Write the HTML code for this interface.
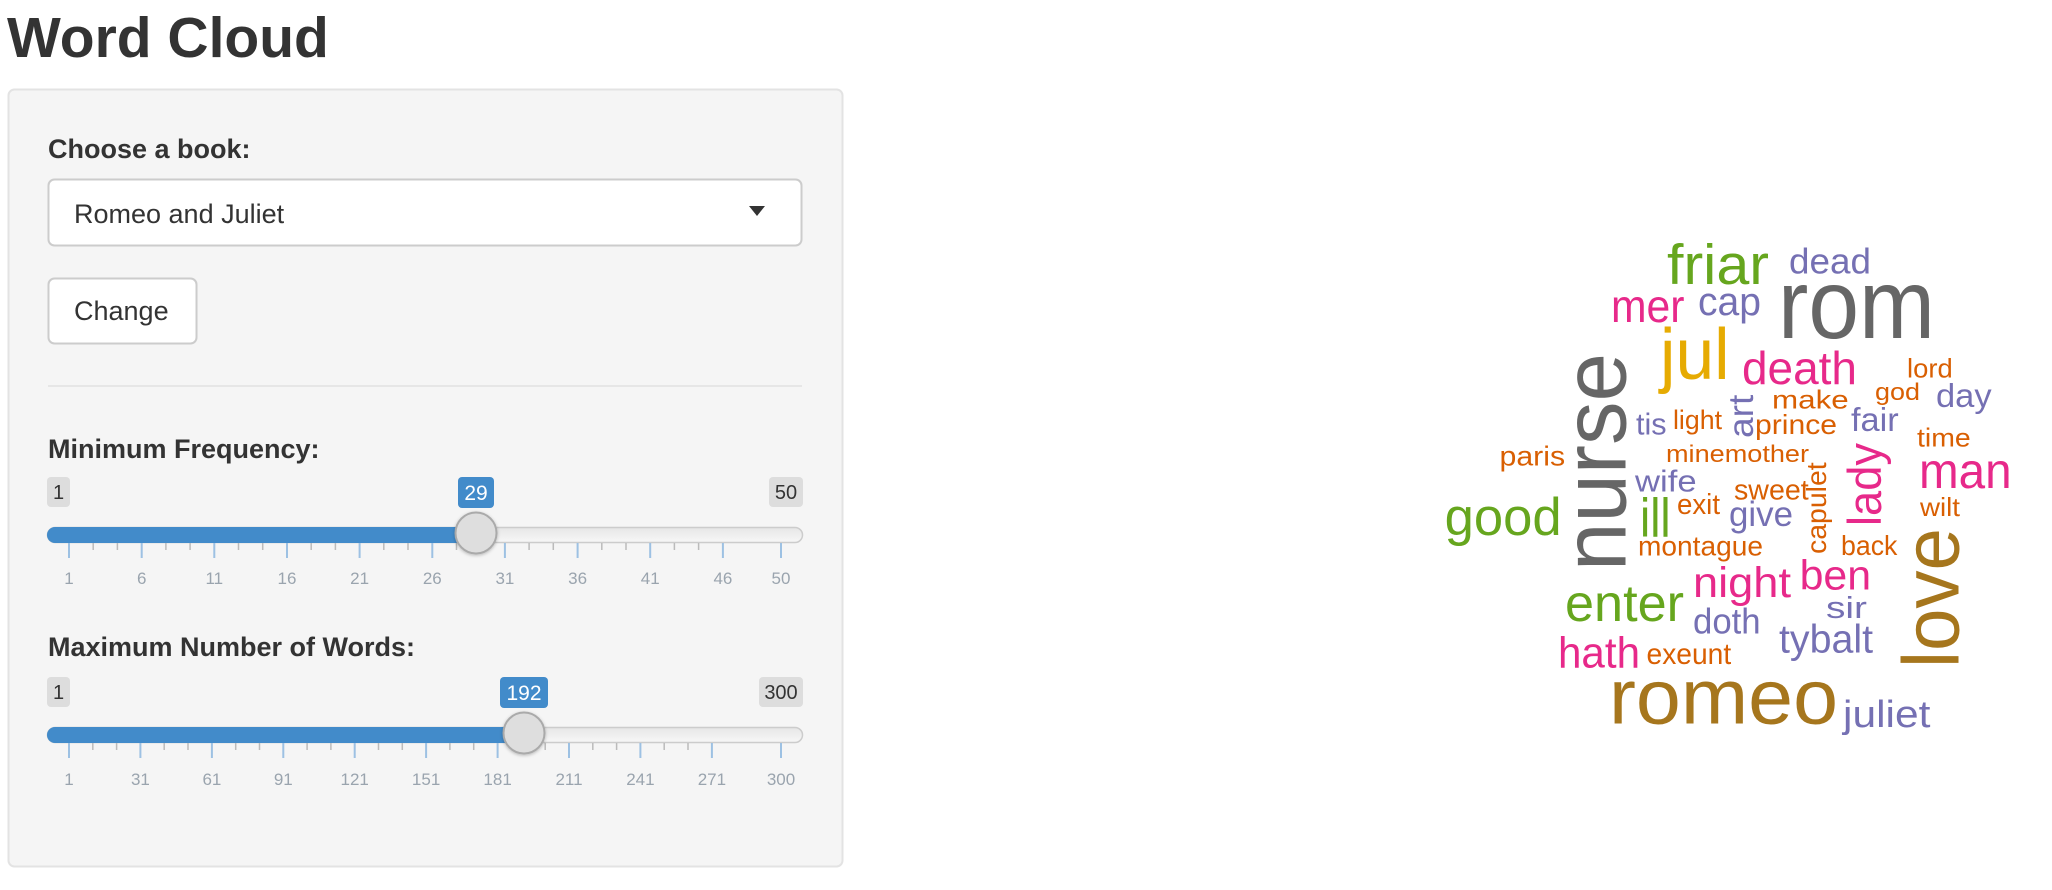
<!DOCTYPE html>
<html><head><meta charset="utf-8"><style>
html,body{margin:0;padding:0;background:#fff;width:2052px;height:890px;overflow:hidden}
svg{display:block;font-family:"Liberation Sans",Arial,sans-serif}
</style></head><body>
<svg width="2052" height="890" viewBox="0 0 2052 890" xmlns="http://www.w3.org/2000/svg">
<defs>
<linearGradient id="trk" x1="0" y1="0" x2="0" y2="1"><stop offset="0" stop-color="#e6e6e6"/><stop offset="1" stop-color="#f7f7f7"/></linearGradient>
<filter id="sh" x="-50%" y="-50%" width="200%" height="200%"><feDropShadow dx="0" dy="1" stdDeviation="1.5" flood-color="#000" flood-opacity="0.25"/></filter>
</defs>
<text x="7" y="57" font-size="57" font-weight="bold" fill="#333">Word Cloud</text>
<rect x="8.5" y="89.5" width="834" height="777" rx="6" fill="#f5f5f5" stroke="#e3e3e3" stroke-width="2"/>
<text x="48" y="158" font-size="27" font-weight="bold" fill="#333">Choose a book:</text>
<rect x="48.5" y="179.5" width="753" height="66" rx="6" fill="#fff" stroke="#ccc" stroke-width="2"/>
<text x="74" y="223" font-size="27" fill="#333">Romeo and Juliet</text>
<path d="M749 206 L765 206 L757 216 Z" fill="#333"/>
<rect x="48.5" y="278.5" width="148" height="65" rx="6" fill="#fff" stroke="#ccc" stroke-width="2"/>
<text x="74" y="320" font-size="27" fill="#333">Change</text>
<line x1="48" y1="386" x2="802" y2="386" stroke="#e6e6e6" stroke-width="2"/>

<!-- slider 1 -->
<text x="48" y="458" font-size="27" font-weight="bold" fill="#333">Minimum Frequency:</text>
<rect x="47" y="477" width="23" height="30" rx="4" fill="#ddd"/>
<text x="58.5" y="499" font-size="20" fill="#333" text-anchor="middle">1</text>
<rect x="769" y="477" width="34" height="30" rx="4" fill="#ddd"/>
<text x="786" y="499" font-size="20" fill="#333" text-anchor="middle">50</text>
<rect x="458" y="477" width="36" height="31" rx="4" fill="#428bca"/>
<text x="476" y="500" font-size="21" fill="#fff" text-anchor="middle">29</text>
<rect x="47.5" y="527.5" width="755" height="15" rx="7.5" fill="url(#trk)" stroke="#ccc" stroke-width="1.5"/>
<rect x="47" y="527" width="430" height="16" rx="8" fill="#428bca"/>
<path d="M69 543v15M141.7 543v15M214.3 543v15M287 543v15M359.6 543v15M432.3 543v15M504.9 543v15M577.6 543v15M650.2 543v15M722.9 543v15M781 543v15" stroke="#9dc1e3" stroke-width="2"/>
<path d="M93.2 543v7M117.4 543v7M165.9 543v7M190.1 543v7M238.5 543v7M262.7 543v7M311.2 543v7M335.4 543v7M383.8 543v7M408 543v7M456.5 543v7M480.7 543v7M529.1 543v7M553.3 543v7M601.8 543v7M626 543v7M674.4 543v7M698.6 543v7" stroke="#bbb" stroke-width="1.5"/>
<g font-size="17" fill="#9aa4ae" text-anchor="middle">
<text x="69" y="584">1</text><text x="141.7" y="584">6</text><text x="214.3" y="584">11</text><text x="287" y="584">16</text><text x="359.6" y="584">21</text><text x="432.3" y="584">26</text><text x="504.9" y="584">31</text><text x="577.6" y="584">36</text><text x="650.2" y="584">41</text><text x="722.9" y="584">46</text><text x="781" y="584">50</text>
</g>
<circle cx="476" cy="533" r="20.5" fill="#dedede" stroke="#aaa" stroke-width="2" filter="url(#sh)"/>

<!-- slider 2 -->
<text x="48" y="656" font-size="27" font-weight="bold" fill="#333">Maximum Number of Words:</text>
<rect x="47" y="677" width="23" height="30" rx="4" fill="#ddd"/>
<text x="58.5" y="699" font-size="20" fill="#333" text-anchor="middle">1</text>
<rect x="759" y="677" width="44" height="30" rx="4" fill="#ddd"/>
<text x="781" y="699" font-size="20" fill="#333" text-anchor="middle">300</text>
<rect x="500" y="677" width="48" height="31" rx="4" fill="#428bca"/>
<text x="524" y="700" font-size="21" fill="#fff" text-anchor="middle">192</text>
<rect x="47.5" y="727.5" width="755" height="15" rx="7.5" fill="url(#trk)" stroke="#ccc" stroke-width="1.5"/>
<rect x="47" y="727" width="478" height="16" rx="8" fill="#428bca"/>
<path d="M69 743v15M140.4 743v15M211.9 743v15M283.3 743v15M354.7 743v15M426.1 743v15M497.6 743v15M569 743v15M640.4 743v15M711.9 743v15M781 743v15" stroke="#9dc1e3" stroke-width="2"/>
<path d="M92.8 743v7M116.6 743v7M164.2 743v7M188 743v7M235.7 743v7M259.5 743v7M307.1 743v7M330.9 743v7M378.5 743v7M402.3 743v7M449.9 743v7M473.7 743v7M521.4 743v7M545.2 743v7M592.8 743v7M616.6 743v7M664.2 743v7M688 743v7" stroke="#bbb" stroke-width="1.5"/>
<g font-size="17" fill="#9aa4ae" text-anchor="middle">
<text x="69" y="785">1</text><text x="140.4" y="785">31</text><text x="211.9" y="785">61</text><text x="283.3" y="785">91</text><text x="354.7" y="785">121</text><text x="426.1" y="785">151</text><text x="497.6" y="785">181</text><text x="569" y="785">211</text><text x="640.4" y="785">241</text><text x="711.9" y="785">271</text><text x="781" y="785">300</text>
</g>
<circle cx="524" cy="733" r="20.5" fill="#dedede" stroke="#aaa" stroke-width="2" filter="url(#sh)"/>

<!-- word cloud -->
<g lengthAdjust="spacingAndGlyphs">
<text x="1667" y="284" font-size="57" fill="#66a61e" textLength="102" lengthAdjust="spacingAndGlyphs">friar</text>
<text x="1789" y="273.6" font-size="36" fill="#7570b3" textLength="82" lengthAdjust="spacingAndGlyphs">dead</text>
<text x="1778" y="338" font-size="98" fill="#666666" textLength="157" lengthAdjust="spacingAndGlyphs">rom</text>
<text x="1611" y="322" font-size="46" fill="#e7298a" textLength="73.5" lengthAdjust="spacingAndGlyphs">mer</text>
<text x="1698" y="315" font-size="40" fill="#7570b3" textLength="63" lengthAdjust="spacingAndGlyphs">cap</text>
<text x="1660" y="379" font-size="72" fill="#e6ab02" textLength="69.6" lengthAdjust="spacingAndGlyphs">jul</text>
<text x="1625.5" y="571" font-size="90" fill="#666666" textLength="218" lengthAdjust="spacingAndGlyphs" transform="rotate(-90 1625.5 571)">nurse</text>
<text x="1742" y="384" font-size="46" fill="#e7298a" textLength="115" lengthAdjust="spacingAndGlyphs">death</text>
<text x="1907" y="377.4" font-size="27" fill="#d95f02" textLength="45.7" lengthAdjust="spacingAndGlyphs">lord</text>
<text x="1772" y="408.6" font-size="26" fill="#d95f02" textLength="76.7" lengthAdjust="spacingAndGlyphs">make</text>
<text x="1875" y="400" font-size="24" fill="#d95f02" textLength="45" lengthAdjust="spacingAndGlyphs">god</text>
<text x="1936" y="406.9" font-size="33" fill="#7570b3" textLength="55.6" lengthAdjust="spacingAndGlyphs">day</text>
<text x="1753" y="438" font-size="35" fill="#7570b3" textLength="43.3" lengthAdjust="spacingAndGlyphs" transform="rotate(-90 1753 438)">art</text>
<text x="1636" y="434.5" font-size="31" fill="#7570b3" textLength="30.6" lengthAdjust="spacingAndGlyphs">tis</text>
<text x="1673" y="429" font-size="27" fill="#d95f02" textLength="49" lengthAdjust="spacingAndGlyphs">light</text>
<text x="1755" y="434" font-size="28" fill="#d95f02" textLength="82" lengthAdjust="spacingAndGlyphs">prince</text>
<text x="1851" y="431" font-size="33" fill="#7570b3" textLength="47.7" lengthAdjust="spacingAndGlyphs">fair</text>
<text x="1917" y="446.6" font-size="26" fill="#d95f02" textLength="53.7" lengthAdjust="spacingAndGlyphs">time</text>
<text x="1499.5" y="465.7" font-size="28" fill="#d95f02" textLength="65.6" lengthAdjust="spacingAndGlyphs">paris</text>
<text x="1666" y="462" font-size="24" fill="#d95f02" textLength="143" lengthAdjust="spacingAndGlyphs">minemother</text>
<text x="1919" y="488" font-size="50" fill="#e7298a" textLength="92.6" lengthAdjust="spacingAndGlyphs">man</text>
<text x="1881" y="526" font-size="47" fill="#e7298a" textLength="83" lengthAdjust="spacingAndGlyphs" transform="rotate(-90 1881 526)">lady</text>
<text x="1826" y="554" font-size="28" fill="#d95f02" textLength="91.7" lengthAdjust="spacingAndGlyphs" transform="rotate(-90 1826 554)">capulet</text>
<text x="1635" y="491.6" font-size="31" fill="#7570b3" textLength="61.6" lengthAdjust="spacingAndGlyphs">wife</text>
<text x="1734" y="499.6" font-size="29" fill="#d95f02" textLength="74.7" lengthAdjust="spacingAndGlyphs">sweet</text>
<text x="1640" y="536.6" font-size="55" fill="#66a61e" textLength="30.6" lengthAdjust="spacingAndGlyphs">ill</text>
<text x="1677" y="514" font-size="29" fill="#d95f02" textLength="43" lengthAdjust="spacingAndGlyphs">exit</text>
<text x="1729" y="526" font-size="35" fill="#7570b3" textLength="64" lengthAdjust="spacingAndGlyphs">give</text>
<text x="1920" y="516" font-size="26" fill="#d95f02" textLength="40" lengthAdjust="spacingAndGlyphs">wilt</text>
<text x="1444.6" y="535" font-size="53" fill="#66a61e" textLength="117" lengthAdjust="spacingAndGlyphs">good</text>
<text x="1638" y="555.6" font-size="28" fill="#d95f02" textLength="125" lengthAdjust="spacingAndGlyphs">montague</text>
<text x="1841" y="555" font-size="28" fill="#d95f02" textLength="56.4" lengthAdjust="spacingAndGlyphs">back</text>
<text x="1958.5" y="668" font-size="80" fill="#a6761d" textLength="140" lengthAdjust="spacingAndGlyphs" transform="rotate(-90 1958.5 668)">love</text>
<text x="1693" y="597" font-size="43" fill="#e7298a" textLength="98" lengthAdjust="spacingAndGlyphs">night</text>
<text x="1799.6" y="589.5" font-size="42" fill="#e7298a" textLength="71.5" lengthAdjust="spacingAndGlyphs">ben</text>
<text x="1565" y="621" font-size="52" fill="#66a61e" textLength="119" lengthAdjust="spacingAndGlyphs">enter</text>
<text x="1826" y="618" font-size="31" fill="#7570b3" textLength="41" lengthAdjust="spacingAndGlyphs">sir</text>
<text x="1693" y="633.5" font-size="36" fill="#7570b3" textLength="67.6" lengthAdjust="spacingAndGlyphs">doth</text>
<text x="1779" y="652.5" font-size="40" fill="#7570b3" textLength="94" lengthAdjust="spacingAndGlyphs">tybalt</text>
<text x="1558" y="667.4" font-size="44" fill="#e7298a" textLength="82" lengthAdjust="spacingAndGlyphs">hath</text>
<text x="1646.5" y="664" font-size="30" fill="#d95f02" textLength="84.7" lengthAdjust="spacingAndGlyphs">exeunt</text>
<text x="1609" y="723.5" font-size="78" fill="#a6761d" textLength="229" lengthAdjust="spacingAndGlyphs">romeo</text>
<text x="1843" y="727" font-size="38" fill="#7570b3" textLength="87.4" lengthAdjust="spacingAndGlyphs">juliet</text>
</g>
</svg>
</body></html>
